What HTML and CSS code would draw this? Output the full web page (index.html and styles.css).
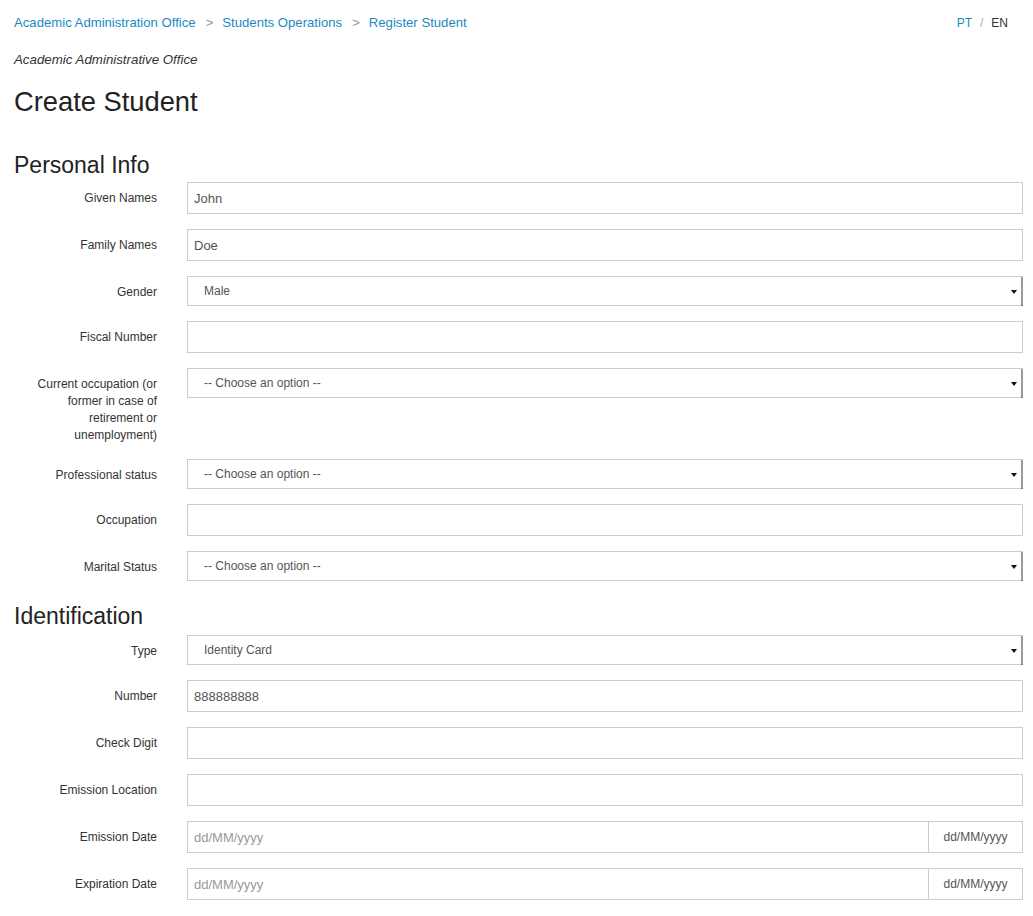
FILE: index.html
```html
<!DOCTYPE html>
<html lang="en">
<head>
<meta charset="utf-8">
<title>Create Student</title>
<link rel="stylesheet" href="styles.css">
</head>
<body>
<div class="page">
  <div class="topbar">
    <nav class="breadcrumb">
      <a href="#">Academic Administration Office</a>
      <span class="sep">&gt;</span>
      <a href="#">Students Operations</a>
      <span class="sep">&gt;</span>
      <a href="#">Register Student</a>
    </nav>
    <div class="lang">
      <a href="#">PT</a><span class="slash">/</span><span class="current">EN</span>
    </div>
  </div>

  <p class="office">Academic Administrative Office</p>
  <h1 class="title">Create Student</h1>

  <form class="form">
    <h3 class="section first">Personal Info</h3>

    <div class="group">
      <label class="label">Given Names</label>
      <input class="control" type="text" value="John">
    </div>
    <div class="group">
      <label class="label">Family Names</label>
      <input class="control" type="text" value="Doe">
    </div>
    <div class="group">
      <label class="label">Gender</label>
      <div class="select-wrap"><select class="select"><option>Male</option></select></div>
    </div>
    <div class="group">
      <label class="label">Fiscal Number</label>
      <input class="control" type="text">
    </div>
    <div class="group">
      <label class="label">Current occupation (or former in case of retirement or unemployment)</label>
      <div class="select-wrap"><select class="select"><option>-- Choose an option --</option></select></div>
    </div>
    <div class="group">
      <label class="label">Professional status</label>
      <div class="select-wrap"><select class="select"><option>-- Choose an option --</option></select></div>
    </div>
    <div class="group">
      <label class="label">Occupation</label>
      <input class="control" type="text">
    </div>
    <div class="group">
      <label class="label">Marital Status</label>
      <div class="select-wrap"><select class="select"><option>-- Choose an option --</option></select></div>
    </div>

    <h3 class="section">Identification</h3>

    <div class="group">
      <label class="label">Type</label>
      <div class="select-wrap"><select class="select"><option>Identity Card</option></select></div>
    </div>
    <div class="group">
      <label class="label">Number</label>
      <input class="control" type="text" value="888888888">
    </div>
    <div class="group">
      <label class="label">Check Digit</label>
      <input class="control" type="text">
    </div>
    <div class="group">
      <label class="label">Emission Location</label>
      <input class="control" type="text">
    </div>
    <div class="group">
      <label class="label">Emission Date</label>
      <div class="date">
        <input class="control date-input" type="text" placeholder="dd/MM/yyyy">
        <span class="addon">dd/MM/yyyy</span>
      </div>
    </div>
    <div class="group">
      <label class="label">Expiration Date</label>
      <div class="date">
        <input class="control date-input" type="text" placeholder="dd/MM/yyyy">
        <span class="addon">dd/MM/yyyy</span>
      </div>
    </div>
  </form>
</div>
</body>
</html>
```

FILE: styles.css
```css
* { box-sizing: border-box; }

html, body {
  margin: 0;
  background: #ffffff;
}

body {
  font-family: "Liberation Sans", Arial, sans-serif;
  font-size: 13px;
  color: #333333;
}

.page {
  padding: 14px 10px 0 14px;
}

.topbar {
  display: flex;
  justify-content: space-between;
  align-items: center;
  line-height: 18px;
}

.breadcrumb {
  display: flex;
  align-items: center;
  font-size: 13.15px;
}

.breadcrumb a {
  color: #1b8ac2;
  text-decoration: none;
}

.breadcrumb .sep {
  color: #999999;
  margin: 0 9px 0 10px;
}

.lang {
  display: flex;
  font-size: 12px;
  margin-right: 15px;
}

.lang a {
  color: #1b8ac2;
  text-decoration: none;
}

.lang .slash {
  color: #aaaaaa;
  margin: 0 8px 0 8px;
}

.lang .current {
  color: #333333;
}

.office {
  margin: 19px 0 0;
  font-size: 13.3px;
  font-style: italic;
  line-height: 18px;
}

.title {
  margin: 18px 0 0;
  font-size: 27.3px;
  font-weight: normal;
  line-height: 30px;
  color: #222222;
}

.form {
  display: flex;
  flex-direction: column;
}

.section {
  margin: 8px 0 6px;
  font-size: 23px;
  font-weight: normal;
  line-height: 25px;
  color: #222222;
}

.section.first {
  margin-top: 36px;
  margin-bottom: 4px;
}

.group {
  display: grid;
  grid-template-columns: 143px 1fr;
  column-gap: 30px;
  align-items: start;
  margin-bottom: 15px;
}

.label {
  text-align: right;
  font-size: 12px;
  line-height: 17px;
  padding-top: 8px;
  color: #333333;
}

.control {
  display: block;
  width: 100%;
  height: 32px;
  margin: 0;
  padding: 0 6px;
  border: 1px solid #cccccc;
  border-radius: 0;
  background: #ffffff;
  font-family: "Liberation Sans", Arial, sans-serif;
  font-size: 13px;
  color: #555555;
  outline: none;
}

.control::placeholder {
  color: #999999;
}

.select-wrap {
  position: relative;
}

.select {
  display: block;
  width: 100%;
  height: 30px;
  margin: 0;
  padding: 0 20px 0 16px;
  border: 1px solid #cccccc;
  border-radius: 0;
  background: #ffffff;
  -webkit-appearance: none;
  appearance: none;
  font-family: "Liberation Sans", Arial, sans-serif;
  font-size: 12px;
  color: #555555;
  outline: none;
}

.select-wrap::before {
  content: "";
  position: absolute;
  top: 1px;
  right: 0;
  bottom: 0;
  width: 2px;
  background: #9a9a9a;
  border-bottom: 1px solid #777777;
}

.select-wrap::after {
  content: "";
  position: absolute;
  right: 6px;
  top: 14px;
  width: 0;
  height: 0;
  border-left: 3px solid transparent;
  border-right: 3px solid transparent;
  border-top: 4px solid #111111;
}

.date {
  display: flex;
}

.date-input {
  flex: 1;
  width: auto;
}

.addon {
  flex: 0 0 94px;
  height: 32px;
  display: flex;
  align-items: center;
  justify-content: center;
  border: 1px solid #cccccc;
  border-left: none;
  background: #ffffff;
  font-size: 12px;
  color: #555555;
}
```
